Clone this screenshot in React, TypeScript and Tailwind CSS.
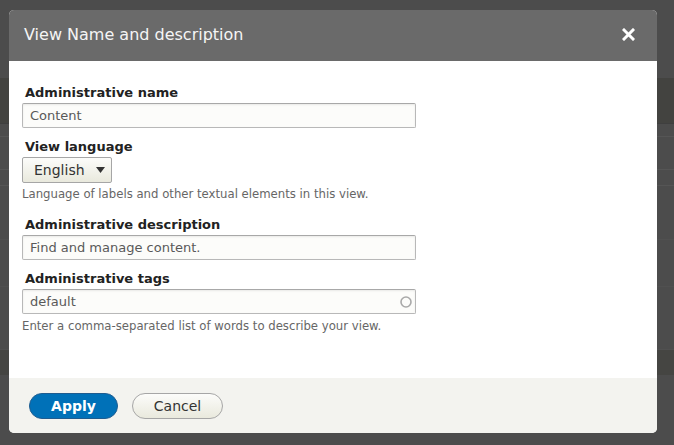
import React from "react";

const font = { fontFamily: '"DejaVu Sans", "Liberation Sans", sans-serif' };

function TextField({ value, throbber }: { value: string; throbber?: boolean }) {
    return (
        <div className="relative w-[394px] h-[25px] flex items-center px-[7px] bg-[#fcfcfa] border border-[#b8b8b8] border-t-[#a8a8a8] rounded-[2px] shadow-[inset_0_1px_2px_rgba(0,0,0,0.08)] text-[13px] text-[#595959]">
            {value}
            {throbber && (
                <svg className="absolute right-[2px] top-[5px]" width="14" height="14" viewBox="0 0 14 14">
                    <circle cx="7" cy="7" r="5" fill="none" stroke="#a9a9a9" strokeWidth="1.6" />
                </svg>
            )}
        </div>
    );
}

function Label({ children, className = "" }: { children: React.ReactNode; className?: string }) {
    return (
        <div className={"ml-[3px] text-[13px] leading-[18px] font-bold text-[#222] " + className}>{children}</div>
    );
}

function Help({ children, className = "" }: { children: React.ReactNode; className?: string }) {
    return <div className={"text-[11.7px] leading-[16px] text-[#666] " + className}>{children}</div>;
}

export default function App() {
    return (
        <div className="relative h-[445px] w-full overflow-hidden bg-[#4c4c4c]" style={font}>
            {/* page behind the overlay */}
            <div className="flex flex-col">
                <div className="h-[78px]" />
                <div className="h-[46px] bg-[#434340] border-b border-[#3f3f3f]" />
                <div className="h-[13px] border-b border-[#555555]" />
                <div className="h-[33px] border-b border-[#555555]" />
                <div className="h-[16px] border-b border-[#555555]" />
                <div className="h-[54px] border-b border-[#505050]" />
                <div className="h-[47px] border-b border-[#505050]" />
                <div className="h-[63px] border-b border-[#505050]" />
                <div className="h-[25px] bg-[#454542]" />
                <div className="h-[35px]" />
                <div className="h-[20px] flex text-[13px] leading-[20px] pt-[2px]">
                    <div className="w-[90px] border-r border-[#444]" />
                    <div className="w-[19px] border-r border-[#444]" />
                    <div className="w-[299px] border-r border-[#444] pl-[6px] flex gap-[40px]">
                        <span className="font-bold text-[#222]">Name</span>
                        <span className="text-[#0a2a40]">Edit Draft Edit</span>
                    </div>
                </div>
            </div>

            {/* dialog */}
            <div className="absolute left-[9px] top-[10px] w-[648px] h-[423px] flex flex-col rounded-[5px] overflow-hidden bg-white">
                <div className="h-[51px] shrink-0 bg-[#6a6a6a] flex items-center justify-between pl-[15px] pr-[22px]">
                    <span className="text-[16px] text-[#f5f5f5] mt-[-1px]">View Name and description</span>
                    <svg width="13" height="13" viewBox="0 0 13 13" className="mt-[-2px]">
                        <path d="M2 2 L11 11 M11 2 L2 11" stroke="#ffffff" strokeWidth="3" strokeLinecap="square" />
                    </svg>
                </div>

                <div className="flex-1 flex flex-col pl-[13px] pt-[23px]">
                    <Label>Administrative name</Label>
                    <div className="mt-[1px]">
                        <TextField value="Content" />
                    </div>

                    <Label className="mt-[10px]">View language</Label>
                    <div className="mt-[1px] w-[90px] h-[26px] flex items-center pl-[11px] pr-[6px] justify-between bg-[linear-gradient(#fcfcfa,#e9e9dd)] border border-[#a6a6a6] rounded-[2px] text-[14px] text-[#333]">
                        <span>English</span>
                        <svg width="9" height="6" viewBox="0 0 9 6">
                            <path d="M0 0 H9 L4.5 6 Z" fill="#333" />
                        </svg>
                    </div>
                    <Help className="mt-[3px]">Language of labels and other textual elements in this view.</Help>

                    <Label className="mt-[14px]">Administrative description</Label>
                    <div className="mt-[1px]">
                        <TextField value="Find and manage content." />
                    </div>

                    <Label className="mt-[10px]">Administrative tags</Label>
                    <div className="mt-[1px]">
                        <TextField value="default" throbber />
                    </div>
                    <Help className="mt-[4px]">Enter a comma-separated list of words to describe your view.</Help>
                </div>

                <div className="h-[55px] shrink-0 bg-[#f3f3ef] flex items-center gap-[14px] pl-[20px] pt-[1px]">
                    <button className="w-[89px] h-[26px] rounded-full bg-[#0071b8] border border-[#1e5c90] text-white font-bold text-[14px]">
                        Apply
                    </button>
                    <button className="w-[91px] h-[26px] rounded-full bg-[linear-gradient(#fcfcfa,#e9e9dd)] border border-[#a6a6a6] text-[#333] text-[14px]">
                        Cancel
                    </button>
                </div>
            </div>
        </div>
    );
}
